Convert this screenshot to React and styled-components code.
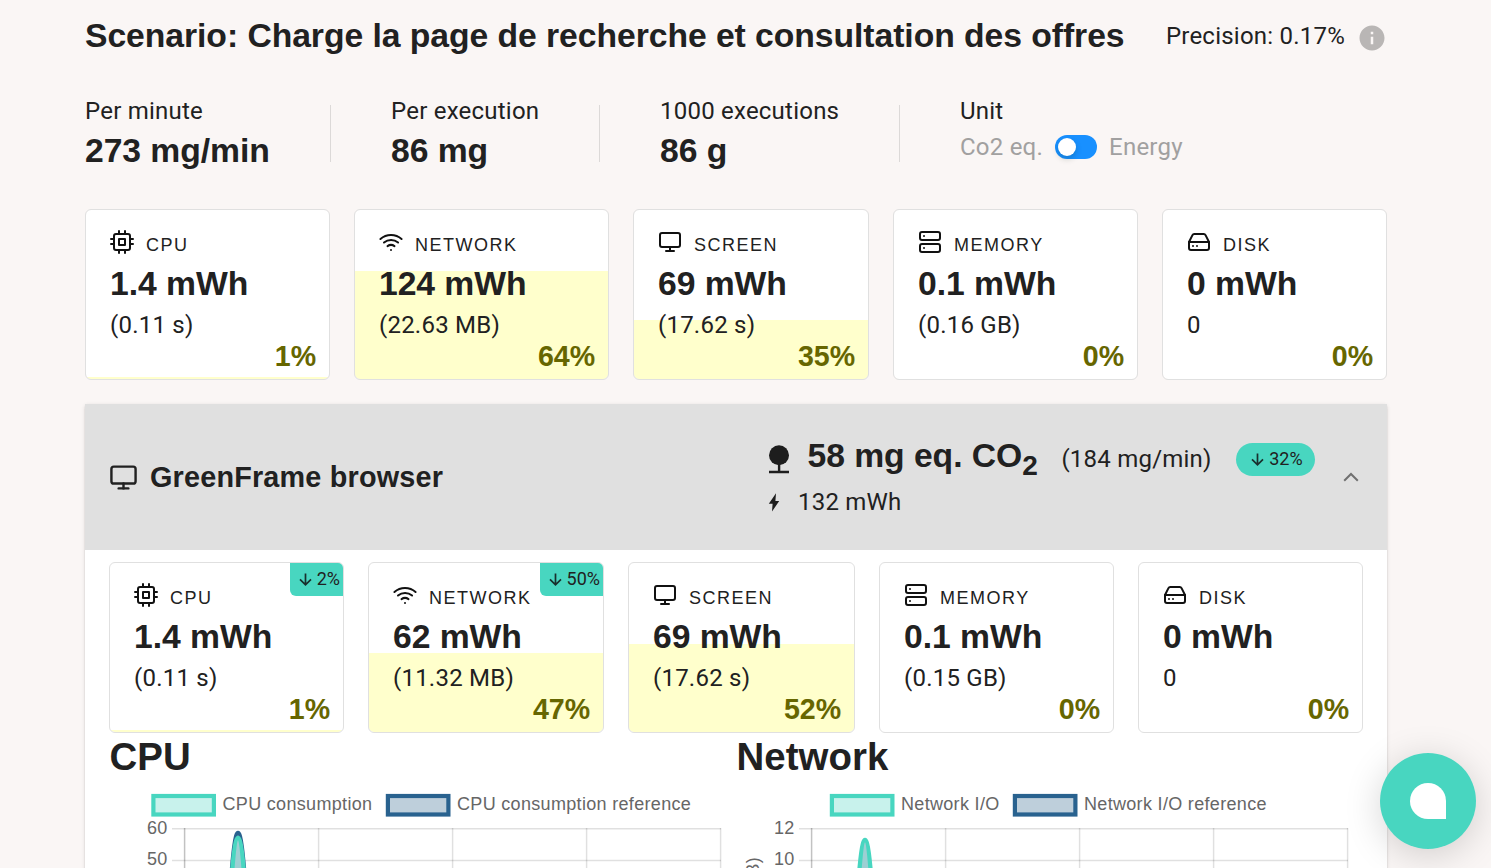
import React from 'react';
import styled, { createGlobalStyle, css } from 'styled-components';
import { FiCpu, FiWifi, FiMonitor, FiServer, FiHardDrive } from 'react-icons/fi';
import { MdInfo } from 'react-icons/md';

const teal = '#48d6c0';
const blue = '#29628f';
const heading = css`
  font-family: 'Liberation Sans', Arial, sans-serif;
  font-weight: 700;
`;
const largeValue = css`
  ${heading}
  font-size: 33.7px;
  letter-spacing: -0.05px;
`;

const GlobalStyle = createGlobalStyle`
  * { box-sizing: border-box; }
  body {
    margin: 0;
    background: #faf6f5;
    color: #212121;
    font: 400 24px/36px Roboto, sans-serif;
    letter-spacing: 0.00938em;
    overflow: hidden;
  }
  h1, h2, h3, p { margin: 0; }
  svg { display: block; flex: none; }
`;

const Page = styled.main`
  height: 100vh;
  overflow: hidden;
  padding: 11px 104px 0 85px;
`;

const Container = styled.div`
  width: 1302px;
`;

const TitleBar = styled.header`
  display: flex;
  justify-content: space-between;
  height: 82px;
`;

const Title = styled.h1`
  ${largeValue}
  line-height: 48px;
  white-space: nowrap;
`;

const Precision = styled.div`
  display: flex;
  padding-top: 7px;
  white-space: nowrap;

  svg {
    margin: 5px 0 0 12px;
    color: #b9b6b5;
  }
`;

const Summary = styled.section`
  display: flex;
  height: 116px;
`;

const Metric = styled.div`
  width: ${(p) => p.$width}px;
  margin-right: ${(p) => (p.$last ? 0 : 60)}px;
  background: ${(p) =>
    p.$last ? 'none' : 'linear-gradient(#dcd9d8, #dcd9d8) right 12px / 1px 57px no-repeat'};
`;

const MetricValue = styled.p`
  ${largeValue}
  line-height: 42px;
`;

const UnitRow = styled.div`
  display: flex;
  align-items: center;
  color: #a1a0a0;
  white-space: nowrap;
`;

const Switch = styled.button`
  width: 42px;
  height: 24px;
  margin: 0 12px;
  padding: 3px;
  border: 0;
  border-radius: 12px;
  background: #1890ff;
`;

const Thumb = styled.span`
  display: block;
  width: 18px;
  height: 18px;
  border-radius: 50%;
  background: #fff;
  box-shadow: 0 3px 6px rgba(0, 35, 11, 0.2);
`;

const CardGrid = styled.div`
  display: grid;
  grid-template-columns: ${(p) => p.$columns};
  column-gap: 24px;
`;

const Card = styled.article`
  position: relative;
  height: 171px;
  padding: 20px 13px 0 24px;
  border: 1px solid #e0e0e0;
  border-radius: 6px;
  background: linear-gradient(to top, #ffffcc ${(p) => p.$share}%, #fff ${(p) => p.$share}%) padding-box;
`;

const CardLabel = styled.div`
  display: flex;
  gap: 12px;
  height: 29px;
  font-family: 'Liberation Sans', Arial, sans-serif;
  font-size: 18px;
  line-height: 31px;
  letter-spacing: 0.08333em;
  text-transform: uppercase;

  svg { color: #111; }
`;

const CardValue = styled.p`
  ${largeValue}
  line-height: 48px;
`;

const CardDetail = styled.p`
  margin-top: 2px;
  line-height: 32px;
`;

const CardShare = styled.p`
  ${heading}
  font-size: 28.6px;
  line-height: 30px;
  letter-spacing: -0.1px;
  text-align: right;
  color: #666600;
`;

const Change = styled.span`
  display: flex;
  align-items: center;
  gap: 5px;
  height: 33px;
  font-size: 18px;
  line-height: 32px;
  letter-spacing: 0;
  background: ${teal};
`;

const ChangeText = styled.span`
  height: 33px;
`;

const CornerChange = styled(Change)`
  position: absolute;
  top: 0;
  right: 0;
  padding: 0 3px 0 9px;
  border-radius: 0 5px 0 6px;
`;

const PillChange = styled(Change)`
  margin-left: 24.5px;
  padding: 0 12px 0 15px;
  border-radius: 17px;
`;

const Panel = styled.section`
  height: 600px;
  margin-top: 24px;
  border-radius: 3px 3px 0 0;
  background: #fff;
  box-shadow: 0 3px 1.5px -1.5px rgba(0, 0, 0, 0.2), 0 1.5px 1.5px rgba(0, 0, 0, 0.14),
    0 1.5px 4.5px rgba(0, 0, 0, 0.12);
`;

const PanelHeader = styled.header`
  display: flex;
  height: 146px;
  padding: 0 28px 0 24px;
  background: #e0e0e0;
`;

const PanelTitle = styled.div`
  display: flex;
  align-items: center;
  gap: 12px;
  width: 658.5px;

  h2 {
    ${heading}
    font-size: 28.8px;
    line-height: 36px;
    letter-spacing: 0.0065em;
  }
`;

const Footprint = styled.div`
  flex: 1;
  padding-top: 27px;
`;

const FootprintRow = styled.div`
  display: flex;
  align-items: center;
  height: ${(p) => p.$height}px;
  white-space: nowrap;
`;

const FootprintValue = styled.div`
  ${largeValue}
  height: 56px;
  margin-left: 18px;
  line-height: 48px;

  sub {
    font-size: 28px;
    line-height: 0;
  }
`;

const FootprintRate = styled.span`
  margin-left: 23.7px;
`;

const Energy = styled.span`
  margin-left: 18.5px;
`;

const PanelBody = styled.div`
  padding: 12px 24px 0;
`;

const Charts = styled.div`
  display: grid;
  grid-template-columns: 627px 627px;
`;

const ChartTitle = styled.h3`
  ${heading}
  padding-left: 0.4px;
  font-size: 38.4px;
  line-height: 48px;
  letter-spacing: 0.1px;
`;

const ChartText = styled.text`
  font: 18px 'Liberation Sans', Arial, sans-serif;
  letter-spacing: 0.32px;
  fill: #666;
`;

const ChatButton = styled.button`
  position: fixed;
  right: 15px;
  bottom: 19px;
  display: grid;
  place-items: center;
  width: 96px;
  height: 96px;
  padding: 0;
  border: 0;
  border-radius: 50%;
  background: ${teal};
  box-shadow: 0 6px 36px rgba(0, 0, 0, 0.17);
`;

const ChatDrop = styled.span`
  width: 36px;
  height: 36px;
  border-radius: 50% 50% 0 50%;
  background: #fff;
`;

const ArrowDown = () => (
  <svg width="13" height="13" viewBox="0 0 13 13" fill="none" stroke="#19302d" strokeWidth="1.7">
    <path d="M6.5 .5v11.2M1 6.3l5.5 5.5L12 6.3" />
  </svg>
);

const Tree = () => (
  <svg width="22" height="29" viewBox="0 0 22 29" fill="#1d1d1d">
    <circle cx="11" cy="10.3" r="10" />
    <path d="M9.9 19h2.4v6.7H21V28.3H1v-2.6h8.9z" />
  </svg>
);

const Bolt = () => (
  <svg width="12" height="19" viewBox="0 0 12 19" fill="#1d1d1d">
    <path d="M8 .2L.8 10.7h3.8L4 18.6l7.2-10.6H7.4z" />
  </svg>
);

const ChevronUp = () => (
  <svg width="16" height="10" viewBox="0 0 16 10" fill="none" stroke="#707070" strokeWidth="2">
    <path d="M1.2 8.8L8 2l6.8 6.8" />
  </svg>
);

const resourceIcons = {
  CPU: FiCpu,
  Network: FiWifi,
  Screen: FiMonitor,
  Memory: FiServer,
  Disk: FiHardDrive,
};

const totals = [
  { name: 'CPU', value: '1.4 mWh', detail: '(0.11 s)', share: 1 },
  { name: 'Network', value: '124 mWh', detail: '(22.63 MB)', share: 64 },
  { name: 'Screen', value: '69 mWh', detail: '(17.62 s)', share: 35 },
  { name: 'Memory', value: '0.1 mWh', detail: '(0.16 GB)', share: 0 },
  { name: 'Disk', value: '0 mWh', detail: '0', share: 0 },
];

const browser = [
  { name: 'CPU', value: '1.4 mWh', detail: '(0.11 s)', share: 1, change: '2%' },
  { name: 'Network', value: '62 mWh', detail: '(11.32 MB)', share: 47, change: '50%' },
  { name: 'Screen', value: '69 mWh', detail: '(17.62 s)', share: 52 },
  { name: 'Memory', value: '0.1 mWh', detail: '(0.15 GB)', share: 0 },
  { name: 'Disk', value: '0 mWh', detail: '0', share: 0 },
];

function Cards({ items, columns }) {
  return (
    <CardGrid $columns={columns}>
      {items.map(({ name, value, detail, share, change }) => {
        const Icon = resourceIcons[name];
        return (
          <Card key={name} $share={share}>
            <CardLabel>
              <Icon size={24} />
              {name}
            </CardLabel>
            <CardValue>{value}</CardValue>
            <CardDetail>{detail}</CardDetail>
            <CardShare>{share}%</CardShare>
            {change && (
              <CornerChange>
                <ArrowDown />
                <ChangeText>{change}</ChangeText>
              </CornerChange>
            )}
          </Card>
        );
      })}
    </CardGrid>
  );
}

function LegendBox({ x, color, fill }) {
  return <rect x={x + 2.4} y="15" width="60.5" height="18.5" fill={fill} stroke={color} strokeWidth="4.2" />;
}

function Chart({ title, legend, ticks, axis, peaks }) {
  return (
    <div>
      <ChartTitle>{title}</ChartTitle>
      <svg width="626" height="300" viewBox="0 0 626 300">
        <g stroke="#000" strokeOpacity="0.12" strokeWidth="1.5">
          {ticks.map((t, i) => (
            <path key={t} d={`M63 ${47.7 + i * 31.9}H612`} />
          ))}
          {[1, 2, 3, 4].map((i) => (
            <path key={i} d={`M${75.6 + i * 134} 47V300`} />
          ))}
          <path d="M75.6 47V300" strokeOpacity="0.24" />
        </g>
        {peaks.map(({ color, fill, d }) => (
          <path key={color} d={d} stroke={color} fill={fill} strokeWidth="4.5" strokeLinejoin="round" />
        ))}
        {ticks.map((t, i) => (
          <ChartText key={t} x="58.7" y={52.6 + i * 31} textAnchor="end">
            {t}
          </ChartText>
        ))}
        <LegendBox x={legend[0].x} color={teal} fill="#c8f2ec" />
        <LegendBox x={legend[1].x} color={blue} fill="#becfdb" />
        {legend.map((l) => (
          <ChartText key={l.text} x={l.x + 71.5} y="29">
            {l.text}
          </ChartText>
        ))}
        {axis && (
          <ChartText transform="translate(22.5 75.8) rotate(-90)" textAnchor="end">
            {axis}
          </ChartText>
        )}
      </svg>
    </div>
  );
}

export default function App() {
  return (
    <Page>
      <GlobalStyle />
      <Container>
        <TitleBar>
          <Title>Scenario: Charge la page de recherche et consultation des offres</Title>
          <Precision>
            Precision: 0.17%
            <MdInfo size={30} />
          </Precision>
        </TitleBar>
        <Summary>
          <Metric $width={246}>
            Per minute
            <MetricValue>273 mg/min</MetricValue>
          </Metric>
          <Metric $width={209}>
            Per execution
            <MetricValue>86 mg</MetricValue>
          </Metric>
          <Metric $width={240}>
            1000 executions
            <MetricValue>86 g</MetricValue>
          </Metric>
          <Metric $width={230} $last>
            Unit
            <UnitRow>
              Co2 eq.
              <Switch aria-label="Unit">
                <Thumb />
              </Switch>
              Energy
            </UnitRow>
          </Metric>
        </Summary>
        <Cards items={totals} columns="245px 255px 236px 245px 225px" />
        <Panel>
          <PanelHeader>
            <PanelTitle>
              <FiMonitor size={29} />
              <h2>GreenFrame browser</h2>
            </PanelTitle>
            <Footprint>
              <FootprintRow $height={56}>
                <Tree />
                <FootprintValue>
                  58 mg eq. CO<sub>2</sub>
                </FootprintValue>
                <FootprintRate>(184 mg/min)</FootprintRate>
                <PillChange>
                  <ArrowDown />
                  <ChangeText>32%</ChangeText>
                </PillChange>
              </FootprintRow>
              <FootprintRow $height={30}>
                <Bolt />
                <Energy>132 mWh</Energy>
              </FootprintRow>
            </Footprint>
            <FootprintRow $height={146}>
              <ChevronUp />
            </FootprintRow>
          </PanelHeader>
          <PanelBody>
            <Cards items={browser} columns="235px 236px 227px 235px 225px" />
            <Charts>
              <Chart
                title="CPU"
                legend={[
                  { x: 42, text: 'CPU consumption' },
                  { x: 276.5, text: 'CPU consumption reference' },
                ]}
                ticks={['60', '50']}
                peaks={[
                  { color: blue, fill: '#becfdb', d: 'M111 300C120 120 124 52 129 52S138 120 147 300' },
                  { color: teal, fill: '#9dcfd3', d: 'M111 300C120 122 124 57 129 57S138 122 147 300' },
                ]}
              />
              <Chart
                title="Network"
                legend={[
                  { x: 93.5, text: 'Network I/O' },
                  { x: 276.5, text: 'Network I/O reference' },
                ]}
                ticks={['12', '10']}
                axis="Network (MB)"
                peaks={[{ color: teal, fill: '#9dcfd3', d: 'M111 300C120 124 124 59 129 59S138 124 147 300' }]}
              />
            </Charts>
          </PanelBody>
        </Panel>
      </Container>
      <ChatButton aria-label="Chat">
        <ChatDrop />
      </ChatButton>
    </Page>
  );
}
